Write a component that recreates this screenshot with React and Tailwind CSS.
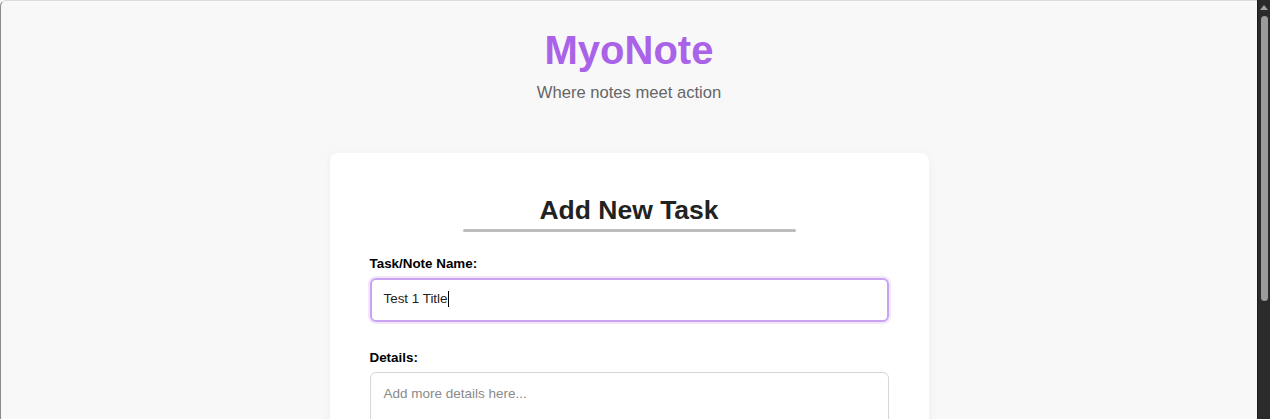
import React from 'react';

const Field = ({ label, children }) => (
    <div className="flex flex-col gap-[6px]">
        <label className="text-[13.4px] font-bold text-black leading-4">{label}</label>
        {children}
    </div>
);

const App = () => {
    return (
        <div className="flex w-full h-[419px] overflow-hidden bg-[#f8f8f8] font-['Liberation_Sans',Arial,sans-serif]">
            <main className="flex-1 flex flex-col items-center border-t border-l border-t-[#dcdcdc] border-l-[#8a8a8a] rounded-tl-[6px]">
                <header className="flex flex-col items-center pt-[25px]">
                    <h1 className="text-[40px] leading-[48px] font-bold text-[#a962e8]">MyoNote</h1>
                    <p className="mt-[9px] text-[16.6px] leading-5 text-[#666666]">Where notes meet action</p>
                </header>

                <section className="mt-[50px] w-[599px] bg-white rounded-[8px] shadow-[0_2px_10px_rgba(0,0,0,0.05)] px-10 pt-[42px] pb-8">
                    <div className="flex flex-col items-center">
                        <h2 className="text-[26.5px] leading-[30px] font-bold text-[#222222]">Add New Task</h2>
                        <div className="mt-[4px] w-[333px] h-[3px] rounded-full bg-[#bdbdbd]" />
                    </div>

                    <div className="mt-[24px] flex flex-col gap-[28px]">
                        <Field label="Task/Note Name:">
                            <div className="h-[44px] flex items-center px-[12px] pb-[2px] border-2 border-[#c9a2f2] rounded-[6px] shadow-[0_0_0_2px_rgba(169,98,232,0.15)]">
                                <span className="text-[13.4px] text-[#222222]">Test 1 Title</span>
                                <span className="w-px h-4 bg-black" />
                            </div>
                        </Field>
                        <Field label="Details:">
                            <div className="h-[100px] px-[13px] pt-[8px] border border-[#d6d6d6] rounded-[6px]">
                                <span className="text-[13.5px] text-[#8a8a8a]">Add more details here...</span>
                            </div>
                        </Field>
                    </div>
                </section>
            </main>

            <aside className="w-[13px] h-full flex flex-col items-center bg-[#2b2b2b] border-l border-[#1c1c1c]">
                <div className="mt-[5px] w-0 h-0 border-l-[4px] border-r-[4px] border-b-[5px] border-l-transparent border-r-transparent border-b-[#a0a0a0]" />
                <div className="mt-[6px] w-[7px] h-[285px] rounded-full bg-[#9b9b9b]" />
            </aside>
        </div>
    );
};

export default App;
